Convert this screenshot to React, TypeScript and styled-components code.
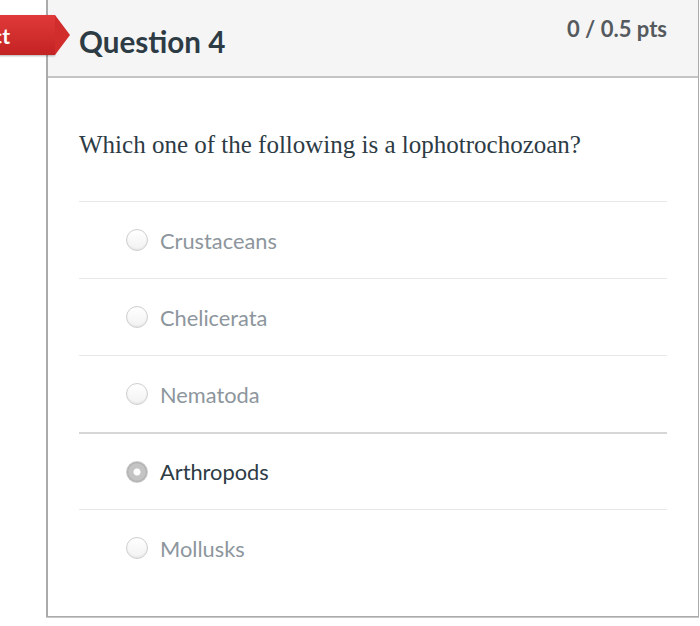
import React from 'react'
import styled, { createGlobalStyle } from 'styled-components'

const GlobalStyle = createGlobalStyle`
  html, body {
    margin: 0;
    padding: 0;
    background: #ffffff;
  }
  body {
    font-family: Lato, "Open Sans", sans-serif;
  }
`

const Page = styled.div`
  width: 700px;
  height: 626px;
  overflow: hidden;
  position: relative;
`

const Card = styled.div`
  position: relative;
  margin-left: 46px;
  width: 650px;
  height: 616px;
  border: 1px solid #ababab;
  border-top: none;
  border-left-width: 2px;
  box-shadow: 0 1px 0 #c8c8c8;
`

const Header = styled.div`
  display: flex;
  justify-content: space-between;
  align-items: flex-start;
  height: 76px;
  padding: 0 31px 0 31px;
  background: #f5f5f5;
  border-bottom: 2px solid #c4c4c4;
`

const Title = styled.h2`
  margin: 23px 0 0;
  font-family: Lato, sans-serif;
  font-weight: 700;
  font-size: 29.6px;
  line-height: 38px;
  color: #2d3b45;
`

const Points = styled.div`
  margin-top: 15px;
  font-family: Lato, sans-serif;
  font-weight: 700;
  font-size: 22px;
  line-height: 28px;
  color: #555a5e;
`

const Badge = styled.div`
  position: absolute;
  top: 15px;
  right: 643px;
  height: 40px;
  padding: 0 45px 0 20px;
  display: flex;
  align-items: center;
  background: linear-gradient(#e03a3a, #c42323);
  color: #ffffff;
  font-family: Lato, sans-serif;
  font-weight: 700;
  font-size: 21px;
  white-space: nowrap;
  box-shadow: 0 1px 2px rgba(0, 0, 0, 0.3);

  &::after {
    content: '';
    position: absolute;
    right: -15px;
    top: 0;
    border-top: 20px solid transparent;
    border-bottom: 20px solid transparent;
    border-left: 15px solid #d22d2d;
  }
`

const Body = styled.div`
  padding: 48px 31px 32px 31px;
`

const QuestionText = styled.p`
  margin: 0 0 38px;
  font-family: "Liberation Serif", "Times New Roman", serif;
  font-size: 25px;
  line-height: 37px;
  color: #2d3b45;
`

const Option = styled.div<{ $strong?: boolean }>`
  display: flex;
  align-items: center;
  box-sizing: border-box;
  height: 77px;
  border-top: ${p => (p.$strong ? '2px solid #d6d6d6' : '1px solid #e8e8e8')};
  padding-left: 47px;
  gap: 12px;
`

const Radio = styled.span<{ $checked?: boolean }>`
  flex: none;
  width: 22px;
  height: 22px;
  border-radius: 50%;
  box-sizing: border-box;
  border: 1px solid #cfcfcf;
  background: ${p =>
    p.$checked
      ? 'radial-gradient(circle, #ffffff 0 3px, #c4c4c4 4px 8px, #a9a9a9 10px)'
      : 'linear-gradient(#ffffff, #f2f2f2)'};
  box-shadow: ${p => (p.$checked ? 'none' : 'inset 0 -1px 2px rgba(0,0,0,0.06)')};
`

const Label = styled.span<{ $checked?: boolean }>`
  font-family: Lato, sans-serif;
  font-size: 21.8px;
  color: ${p => (p.$checked ? '#2d3b45' : '#8d969d')};
`

const answers = ['Crustaceans', 'Chelicerata', 'Nematoda', 'Arthropods', 'Mollusks']
const selected = 'Arthropods'

export default function App() {
  return (
    <Page>
      <GlobalStyle />
      <Card>
        <Badge>Incorrect</Badge>
        <Header>
          <Title>Question 4</Title>
          <Points>0 / 0.5 pts</Points>
        </Header>
        <Body>
          <QuestionText>Which one of the following is a lophotrochozoan?</QuestionText>
          {answers.map(a => (
            <Option key={a} $strong={a === selected}>
              <Radio $checked={a === selected} />
              <Label $checked={a === selected}>{a}</Label>
            </Option>
          ))}
        </Body>
      </Card>
    </Page>
  )
}
